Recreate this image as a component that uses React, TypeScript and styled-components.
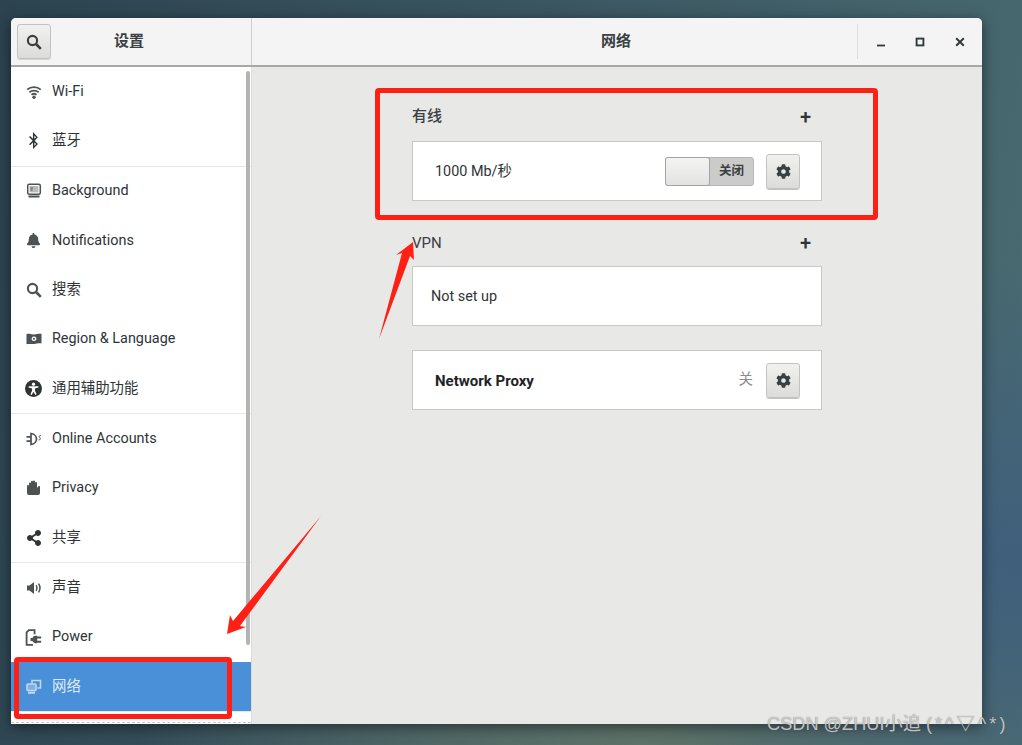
import React from 'react';
import styled, { createGlobalStyle } from 'styled-components';
import { FaBell, FaBluetoothB, FaCog, FaShareAlt } from 'react-icons/fa';

const FONT = 'Roboto, "Noto Sans CJK SC", sans-serif';

const WifiIcon = () => (
  <svg viewBox="0 0 16 16" width="16" height="16" fill="none" stroke="currentColor" strokeWidth="1.8">
    <path d="M1.2 5.6C5 2.4 11 2.4 14.8 5.6" />
    <path d="M3.4 8.2C6 6.1 10 6.1 12.6 8.2" />
    <path d="M5.5 10.7C7 9.6 9 9.6 10.5 10.7" />
    <circle cx="8" cy="13.2" r="1.7" fill="currentColor" stroke="none" />
  </svg>
);

const MonitorIcon = () => (
  <svg viewBox="0 0 16 16" width="16" height="16" fill="none" stroke="currentColor">
    <rect x="1.7" y="1.2" width="12.6" height="10" rx="1.5" strokeWidth="1.5" />
    <rect x="3.5" y="3" width="9" height="6.4" fill="currentColor" stroke="none" opacity="0.4" />
    <path d="M4.5 5h2.5M4.5 7h2" strokeWidth="1.2" />
    <path d="M2.5 12.6h11v1.8h-11z" fill="currentColor" stroke="none" />
  </svg>
);

const SearchIcon = () => (
  <svg viewBox="0 0 16 16" width="16" height="16" fill="none" stroke="currentColor">
    <circle cx="6.5" cy="6.5" r="4.6" strokeWidth="2.1" />
    <path d="M10 10l4.8 4.8" strokeWidth="2.6" />
  </svg>
);

const RegionIcon = () => (
  <svg viewBox="0 0 16 16" width="16" height="16">
    <path
      fill="currentColor"
      fillRule="evenodd"
      d="M0.5 3.2C3 2.2 5 3.8 8 3.4s5-1 7.5-0.6v9.6c-2.5-0.6-4.6 0.2-7.5 0.6s-5-0.6-7.5 0.2zM8 5.6a2.4 2.2 0 1 0 0.01 0zM8 6.8a1 1 0 1 1-0.01 0z"
    />
  </svg>
);

const AccessIcon = () => (
  <svg viewBox="0 0 16 16" width="17" height="17">
    <circle cx="8" cy="8" r="8" fill="currentColor" />
    <circle cx="8" cy="3.9" r="1.5" fill="#fff" />
    <path d="M3.4 5.8h9.2v1.3l-3.2 0.8v2.2l1.5 3.4-1.2 0.5L8 11l-1.7 3-1.2-0.5 1.5-3.4V7.9L3.4 7.1z" fill="#fff" />
  </svg>
);

const AccountsIcon = () => (
  <svg viewBox="0 0 16 16" width="16" height="16" fill="none" stroke="currentColor">
    <path d="M5 2.5C9 3 10.5 6 10.5 8S9 13 5 13.5z" strokeWidth="1.7" />
    <path d="M0.5 5.8h4.5M0.5 10.2h4.5" strokeWidth="1.7" />
    <path d="M14.8 4.5c-1.8 0-2 1.2-1 2.2s0.6 2.3-1.2 2.3" strokeWidth="1" />
  </svg>
);

const HandIcon = () => (
  <svg viewBox="0 0 16 16" width="16" height="16">
    <path
      fill="currentColor"
      d="M1 6a1 1 0 0 1 2 0V3.4a1 1 0 0 1 2 0V1.8a1 1 0 0 1 2 0V1.4a1 1 0 0 1 2 0V3a1 1 0 0 1 2 0v5l1.2-1.6a1 1 0 0 1 1.8 0.6V13a2 2 0 0 1-2 2H3a2 2 0 0 1-2-2z"
    />
  </svg>
);

const SpeakerIcon = () => (
  <svg viewBox="0 0 16 16" width="16" height="16" fill="none" stroke="currentColor">
    <path d="M1 5.5h2.5L8 2v12l-4.5-3.5H1z" fill="currentColor" stroke="none" />
    <path d="M10.2 5.2c1 1.7 1 3.9 0 5.6" strokeWidth="1.5" />
    <path d="M12.6 3.6c1.7 2.7 1.7 6.1 0 8.8" strokeWidth="1.5" />
  </svg>
);

const PowerIcon = () => (
  <svg viewBox="0 0 16 16" width="17" height="17" fill="none" stroke="currentColor">
    <path d="M7.5 15H1.5V3.2L3.7 1H9v4" strokeWidth="1.7" />
    <path d="M7 8.4a3 3 0 0 1 3-2h1.5v7H10a3 3 0 0 1-3-2H5.2V8.4z" fill="currentColor" stroke="none" />
    <path d="M11 8h4.2M11 12h4.2" strokeWidth="1.7" />
  </svg>
);

const NetworkIcon = () => (
  <svg viewBox="0 0 16 16" width="16" height="16" fill="none" stroke="currentColor" opacity="0.8">
    <path d="M6 4.2V1.5h8.5v7.5H11.4" strokeWidth="1.6" />
    <rect x="1" y="5" width="9" height="6.6" rx="1" strokeWidth="1.6" fill="currentColor" fillOpacity="0.45" />
    <path d="M2 13h7v1.8H2z" fill="currentColor" stroke="none" />
  </svg>
);

type Item = { label: string; icon: React.ReactNode; active?: boolean };

const groups: Item[][] = [
  [
    { label: 'Wi-Fi', icon: <WifiIcon /> },
    { label: '蓝牙', icon: <FaBluetoothB size={17} /> },
  ],
  [
    { label: 'Background', icon: <MonitorIcon /> },
    { label: 'Notifications', icon: <FaBell size={15} /> },
    { label: '搜索', icon: <SearchIcon /> },
    { label: 'Region & Language', icon: <RegionIcon /> },
    { label: '通用辅助功能', icon: <AccessIcon /> },
  ],
  [
    { label: 'Online Accounts', icon: <AccountsIcon /> },
    { label: 'Privacy', icon: <HandIcon /> },
    { label: '共享', icon: <FaShareAlt size={16} /> },
  ],
  [
    { label: '声音', icon: <SpeakerIcon /> },
    { label: 'Power', icon: <PowerIcon /> },
    { label: '网络', icon: <NetworkIcon />, active: true },
  ],
];

export default function App() {
  return (
    <Desktop>
      <GlobalStyle />
      <Window>
        <TitleBar>
          <SideHeader>
            <SearchButton>
              <SearchIcon />
            </SearchButton>
            <SideTitle>设置</SideTitle>
          </SideHeader>
          <MainHeader>
            <span />
            <MainTitle>网络</MainTitle>
            <WindowControls>
              <WindowButton>
                <svg viewBox="0 0 10 10" width="10" height="10">
                  <rect x="1" y="7.6" width="8" height="1.8" fill="currentColor" />
                </svg>
              </WindowButton>
              <WindowButton>
                <svg viewBox="0 0 10 10" width="10" height="10" fill="none" stroke="currentColor">
                  <rect x="1.6" y="1.6" width="6.8" height="6.8" strokeWidth="1.9" />
                </svg>
              </WindowButton>
              <WindowButton>
                <svg viewBox="0 0 10 10" width="10" height="10" fill="none" stroke="currentColor">
                  <path d="M1.2 1.2l7.6 7.6M8.8 1.2l-7.6 7.6" strokeWidth="2" />
                </svg>
              </WindowButton>
            </WindowControls>
          </MainHeader>
        </TitleBar>
        <Body>
          <Sidebar>
            {groups.map((group, i) => (
              <SideGroup key={i}>
                {group.map((item) => (
                  <SideRow key={item.label} $active={item.active}>
                    <SideIcon>{item.icon}</SideIcon>
                    <SideLabel>{item.label}</SideLabel>
                  </SideRow>
                ))}
              </SideGroup>
            ))}
            <OverflowEdge />
            <Scrollbar />
          </Sidebar>
          <Main>
            <Column>
              <SectionHeader>
                <SectionTitle>有线</SectionTitle>
                <PlusSign>+</PlusSign>
              </SectionHeader>
              <Frame>
                <RowLabel>1000 Mb/秒</RowLabel>
                <Toggle>
                  <Knob />
                  <ToggleText>关闭</ToggleText>
                </Toggle>
                <GearButton>
                  <FaCog size={15} />
                </GearButton>
              </Frame>
              <VpnHeader>
                <SectionTitle>VPN</SectionTitle>
                <PlusSign>+</PlusSign>
              </VpnHeader>
              <Frame $plain>
                <RowLabel>Not set up</RowLabel>
              </Frame>
              <ProxyFrame>
                <ProxyLabel>Network Proxy</ProxyLabel>
                <OffLabel>关</OffLabel>
                <GearButton>
                  <FaCog size={15} />
                </GearButton>
              </ProxyFrame>
            </Column>
          </Main>
        </Body>
      </Window>

      <WiredMark />
      <NetworkMark />
      <ArrowLayer viewBox="0 0 1022 745">
        <polygon points="413,242 414,260 410,256 379,339 402,253 396,255" />
        <polygon points="321,516 240,626 246,627 227,634 230,615 233,621" />
      </ArrowLayer>
      <Watermark>
        CSDN @ZHUI小追 <WatermarkFace>(*^▽^*)</WatermarkFace>
      </Watermark>
    </Desktop>
  );
}

const GlobalStyle = createGlobalStyle`
  html, body {
    margin: 0;
    height: 100%;
    overflow: hidden;
  }
  body {
    font-family: ${FONT};
  }
`;

const Desktop = styled.div`
  position: relative;
  box-sizing: border-box;
  width: 1022px;
  height: 745px;
  padding: 18px 40px 21px 11px;
  overflow: hidden;
  background:
    radial-gradient(ellipse 420px 300px at 1022px 560px, #3f5f7c 0%, rgba(63, 95, 124, 0) 100%),
    radial-gradient(ellipse 500px 160px at 640px 745px, #5d7268 0%, rgba(93, 114, 104, 0) 100%),
    linear-gradient(100deg, #2c4350 0%, #3a5560 45%, #4a6c72 100%);
`;

const Window = styled.div`
  display: flex;
  flex-direction: column;
  width: 971px;
  height: 706px;
  overflow: hidden;
  border-radius: 5px 5px 0 0;
  color: #2e3436;
  background: #e8e8e7;
  box-shadow: 0 3px 14px rgba(0, 0, 0, 0.5);
`;

const TitleBar = styled.div`
  display: flex;
  flex: none;
  box-sizing: border-box;
  height: 49px;
  background: #f4f4f4;
  border-bottom: 2px solid #a8a8a6;
`;

const SideHeader = styled.div`
  display: flex;
  flex: none;
  align-items: center;
  box-sizing: border-box;
  width: 241px;
  padding-left: 6px;
  border-right: 1px solid #d0d0ce;
`;

const SearchButton = styled.div`
  display: flex;
  flex: none;
  align-items: center;
  justify-content: center;
  box-sizing: border-box;
  width: 34px;
  height: 35px;
  color: #3a3f41;
  background: linear-gradient(#f1f1f0, #dcdcda);
  border: 1px solid #c2c2c0;
  border-radius: 3px;
  box-shadow: 0 1px 0 #d4d4d2;
`;

const SideTitle = styled.div`
  flex: 1;
  padding-right: 44px;
  padding-bottom: 2px;
  font-size: 15px;
  font-weight: 700;
  line-height: 20px;
  color: #3b4042;
  text-align: center;
`;

const MainHeader = styled.div`
  display: grid;
  flex: 1;
  grid-template-columns: 123px 1fr 125px;
  align-items: center;
`;

const MainTitle = styled.div`
  padding-bottom: 2px;
  font-size: 15px;
  font-weight: 700;
  line-height: 20px;
  color: #3b4042;
  text-align: center;
`;

const WindowControls = styled.div`
  display: flex;
  align-items: center;
  height: 35px;
  padding-left: 3px;
  border-left: 1px solid #dcdcda;
`;

const WindowButton = styled.div`
  display: flex;
  align-items: center;
  justify-content: center;
  width: 39.5px;
  color: #33393b;
`;

const Body = styled.div`
  display: flex;
  flex: 1;
  min-height: 0;
`;

const Sidebar = styled.div`
  position: relative;
  flex: none;
  box-sizing: border-box;
  width: 241px;
  background: #fff;
  border-right: 1px solid #dcdcda;
`;

const SideGroup = styled.div`
  border-bottom: 1px solid #e7e7e6;

  &:last-of-type {
    border-bottom: none;
  }
`;

const SideRow = styled.div<{ $active?: boolean }>`
  display: flex;
  align-items: center;
  height: 49.33px;
  padding-left: 14px;
  color: ${(p) => (p.$active ? '#dfeaf6' : '#2e3436')};
  background: ${(p) => (p.$active ? '#4a90d9' : 'transparent')};
`;

const SideLabel = styled.span`
  font-size: 14.4px;
  line-height: 20px;
`;

const SideIcon = styled.span`
  display: flex;
  flex: none;
  align-items: center;
  justify-content: center;
  width: 17px;
  margin-right: 10px;
  color: #4d5254;

  ${SideRow}:last-child & {
    color: inherit;
  }
`;

const OverflowEdge = styled.div`
  position: absolute;
  right: 0;
  bottom: 1px;
  left: 0;
  border-bottom: 1px dashed #c8c8c6;
`;

const Scrollbar = styled.div`
  position: absolute;
  top: 4px;
  right: 1px;
  width: 4px;
  height: 574px;
  background: #b4b4b2;
  border-radius: 2px;
`;

const Main = styled.div`
  display: flex;
  flex: 1;
  justify-content: center;
  padding-top: 37px;
`;

const Column = styled.div`
  width: 410px;
`;

const SectionHeader = styled.div`
  display: flex;
  align-items: center;
  justify-content: space-between;
  height: 24px;
  padding-right: 11px;
  margin-bottom: 13px;
`;

const VpnHeader = styled(SectionHeader)`
  margin-top: 29px;
  margin-bottom: 12px;
`;

const SectionTitle = styled.div`
  font-size: 15px;
  font-weight: 500;
  line-height: 22px;
  color: #3b4042;

  ${VpnHeader} & {
    padding-top: 2px;
    font-weight: 400;
  }
`;

const PlusSign = styled.div`
  padding-top: 2px;
  font-size: 20px;
  font-weight: 500;
  line-height: 24px;
  color: #2e3436;
`;

const Frame = styled.div<{ $plain?: boolean }>`
  display: flex;
  align-items: center;
  box-sizing: border-box;
  height: 60px;
  padding: 0 21px 0 ${(p) => (p.$plain ? 18 : 22)}px;
  background: #fff;
  border: 1px solid #c8c8c6;
`;

const ProxyFrame = styled(Frame)`
  margin-top: 24px;
`;

const RowLabel = styled.div`
  flex: 1;
  padding-top: 2px;
  font-size: 14.4px;
  line-height: 20px;
  color: #2e3436;
`;

const ProxyLabel = styled(RowLabel)`
  font-size: 15px;
  font-weight: 700;
  color: #1f2325;
`;

const OffLabel = styled.div`
  margin-right: 13px;
  font-size: 14.5px;
  line-height: 20px;
  color: #8a8d8e;
`;

const Toggle = styled.div`
  display: flex;
  align-items: center;
  box-sizing: border-box;
  width: 89px;
  height: 29px;
  margin-right: 12px;
  background: #cbcbc9;
  border: 1px solid #b4b4b2;
  border-radius: 3px;
`;

const Knob = styled.div`
  flex: none;
  box-sizing: border-box;
  width: 45px;
  height: 29px;
  margin: -1px 0 -1px -1px;
  background: linear-gradient(#f4f4f3, #e2e2e0);
  border: 1px solid #a4a4a2;
  border-radius: 3px;
`;

const ToggleText = styled.div`
  flex: 1;
  font-size: 12.5px;
  font-weight: 700;
  line-height: 18px;
  color: #3b4042;
  text-align: center;
`;

const GearButton = styled.div`
  display: flex;
  flex: none;
  align-items: center;
  justify-content: center;
  box-sizing: border-box;
  width: 34px;
  height: 35px;
  color: #3a3f41;
  background: linear-gradient(#f1f1f0, #dcdcda);
  border: 1px solid #c2c2c0;
  border-radius: 3px;
  box-shadow: 0 1px 0 #c4c4c2;
`;

const WiredMark = styled.div`
  position: absolute;
  top: 88px;
  left: 375px;
  box-sizing: border-box;
  width: 503px;
  height: 132px;
  border: 5px solid #ff2015;
  border-radius: 4px;
`;

const NetworkMark = styled.div`
  position: absolute;
  top: 657px;
  left: 14px;
  box-sizing: border-box;
  width: 218px;
  height: 62px;
  border: 5px solid #ff2015;
  border-radius: 4px;
`;

const ArrowLayer = styled.svg`
  position: absolute;
  top: 0;
  left: 0;
  width: 1022px;
  height: 745px;
  fill: #ff2015;
  pointer-events: none;
`;

const Watermark = styled.div`
  position: absolute;
  top: 712px;
  left: 767px;
  font-family: "Liberation Sans", "Noto Sans CJK SC", sans-serif;
  font-size: 18.2px;
  line-height: 24px;
  color: rgba(235, 235, 235, 0.75);
  text-shadow: 0 0 1px rgba(60, 60, 60, 0.8);
  white-space: nowrap;
`;

const WatermarkFace = styled.span`
  letter-spacing: 3px;
`;
